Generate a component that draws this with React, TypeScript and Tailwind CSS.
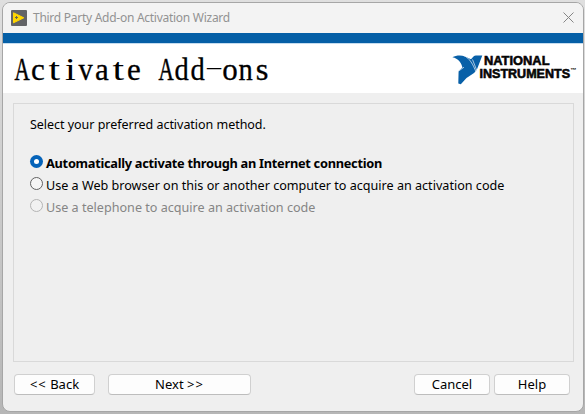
import React from 'react';

function Logo() {
  return (
    <svg className="shrink-0" width="127" height="36" viewBox="450 50 127 36" role="img" aria-label="National Instruments">
      <path d="M452.4 57.2C456 55.2 461 54.8 465 56.4L471 59.3 473.5 56.4Q474.5 55.5 476 55.5H482.3L477 69.2Q476 71.5 474 73L466.5 78 460.8 84.2 458.3 83.5 458.6 71 462.4 67.4C461.4 62.5 458.2 58.5 452.4 57.2Z" fill="#0860a8" />
      <path d="M463.5 55.4C469.5 58 473 64 476.4 73M458.4 71.2 464 67.2M472.5 59.5 476.8 70.5" fill="none" stroke="white" strokeWidth=".65" />
      <g fill="#050505" stroke="#050505" strokeWidth=".6" fontFamily="Liberation Sans, Arial, sans-serif" fontWeight="700" fontSize="13.4">
        <text x="484" y="65.4" textLength="65.5" lengthAdjust="spacingAndGlyphs">NATIONAL</text>
        <text x="479.5" y="77.7" textLength="90.5" lengthAdjust="spacingAndGlyphs">INSTRUMENTS</text>
      </g>
      <text x="570.3" y="71.9" fontFamily="Liberation Sans, Arial, sans-serif" fontWeight="700" fontSize="6" textLength="6" lengthAdjust="spacingAndGlyphs">™</text>
    </svg>
  );
}

function Radio({ checked = false, disabled = false }: { checked?: boolean; disabled?: boolean }) {
  return (
    <span className={`-mt-[3px] flex size-[13px] shrink-0 items-center justify-center rounded-full ${checked ? 'bg-[#0563b9]' : disabled ? 'border border-[#b4b4b4] bg-[#f1f1f1]' : 'border border-[#626262] bg-[#f5f5f5]'}`}>
      {checked && <span className="size-[5px] rounded-full bg-white" />}
    </span>
  );
}

function Button({ children, className }: { children: React.ReactNode; className: string }) {
  return <button className={`h-[21px] rounded-[4px] border border-[#d0d0d0] border-b-[#bdbdbd] bg-[#fdfdfd] pb-px text-center leading-[18px] text-black ${className}`}>{children}</button>;
}

// Fit proportional serif glyphs to the heading's fixed character cells.
function glyphStyle(character: string) {
  if (character === 'A') return 'scale-x-[0.68] [-webkit-text-stroke:0.5px_black]';
  if (character === '-') return 'scale-x-[1.8] scale-y-[0.6] -translate-y-[3px]';
  if (character === 't') return 'scale-x-[1.35]';
  if (character === 'i') return 'scale-x-[1.25]';
  if (character === 'v' || character === 'n' || character === 'd') return 'scale-x-[0.92] [-webkit-text-stroke:0.3px_black]';
  if (character === 's') return 'scale-x-[1.05] [-webkit-text-stroke:0.3px_black]';
  return '[-webkit-text-stroke:0.3px_black]';
}

export default function App() {
  return (
    <main className="h-[414px] w-[585px] overflow-hidden bg-linear-to-b from-[#dfdfdf] to-[#b6b6b6] pt-[2px] pl-[2px] font-['Noto_Sans',sans-serif] text-[13px]">
      <section className="flex h-[410px] w-[582px] flex-col overflow-hidden rounded-[8px] border border-[#a6a6a6] bg-[#efefef]">
        <header className="flex h-[30px] shrink-0 items-center bg-[#f3f3f3] pr-[9px] pl-2">
          <svg width="16" height="16" viewBox="0 0 16 16" className="-mt-px">
            <rect width="16" height="16" rx="1" fill="#626366" />
            <path d="M2.5 2.8 12.8 7.8 2.5 12.8Z" fill="#ffd500" stroke="#ffd500" strokeLinejoin="round" />
            <path d="M4 7.5H7M5.5 6V9" stroke="#68654a" />
          </svg>
          <h1 className="ml-[6px] whitespace-nowrap text-[12px] tracking-[-0.27px] text-[#929292]">Third Party Add-on Activation Wizard</h1>
          <svg className="ml-auto -mt-[2px]" width="11" height="11" viewBox="0 0 11 11"><path d="M.5.5 10.5 10.5M10.5.5.5 10.5" stroke="#858585" /></svg>
        </header>
        <div className="h-[11px] shrink-0 border-b border-[#c4dcef] bg-[#055fa6]" />
        <div className="flex h-[49px] shrink-0 justify-between bg-white pt-[6px] pr-[6px] pl-[11px]">
          <h2 aria-label="Activate Add-ons" className="flex h-10 font-['Liberation_Serif',serif] text-[31px] leading-10 text-black">
            {Array.from('Activate Add-ons').map((character, i) => (
              <span key={i} className="flex w-4 justify-center whitespace-pre">
                <span className={glyphStyle(character)}>{character}</span>
              </span>
            ))}
          </h2>
          <Logo />
        </div>
        <div className="mt-[10px] ml-[10px] h-[259px] w-[561px] shrink-0 border border-[#d9d9d9] pt-3 pl-4">
          <p className="h-[18px] whitespace-nowrap text-[12.5px] leading-[18px] tracking-[-0.03px]">Select your preferred activation method.</p>
          <div className="mt-[18px] flex flex-col">
            <label className="flex h-[22px] items-center gap-[3px] whitespace-nowrap text-[12.8px] font-bold tracking-[-0.28px]"><Radio checked /><span className="pt-px">Automatically activate through an Internet connection</span></label>
            <label className="flex h-[22px] items-center gap-[3px] whitespace-nowrap text-[12.6px]"><Radio /><span className="pt-[3px]">Use a Web browser on this or another computer to acquire an activation code</span></label>
            <label className="flex h-[22px] items-center gap-[3px] whitespace-nowrap text-[12.6px] text-[#858585]"><Radio disabled /><span className="pt-[3px]">Use a telephone to acquire an activation code</span></label>
          </div>
        </div>
        <footer className="mt-3 flex pl-[11px]">
          <Button className="w-[81px]"><span className="tracking-[1px]">&lt;&lt;</span> Back</Button>
          <Button className="ml-[13px] w-[143px]">Next <span className="tracking-[1px]">&gt;&gt;</span></Button>
          <Button className="ml-[163px] w-[76px]">Cancel</Button>
          <Button className="ml-1 w-[76px]">Help</Button>
        </footer>
      </section>
    </main>
  );
}
